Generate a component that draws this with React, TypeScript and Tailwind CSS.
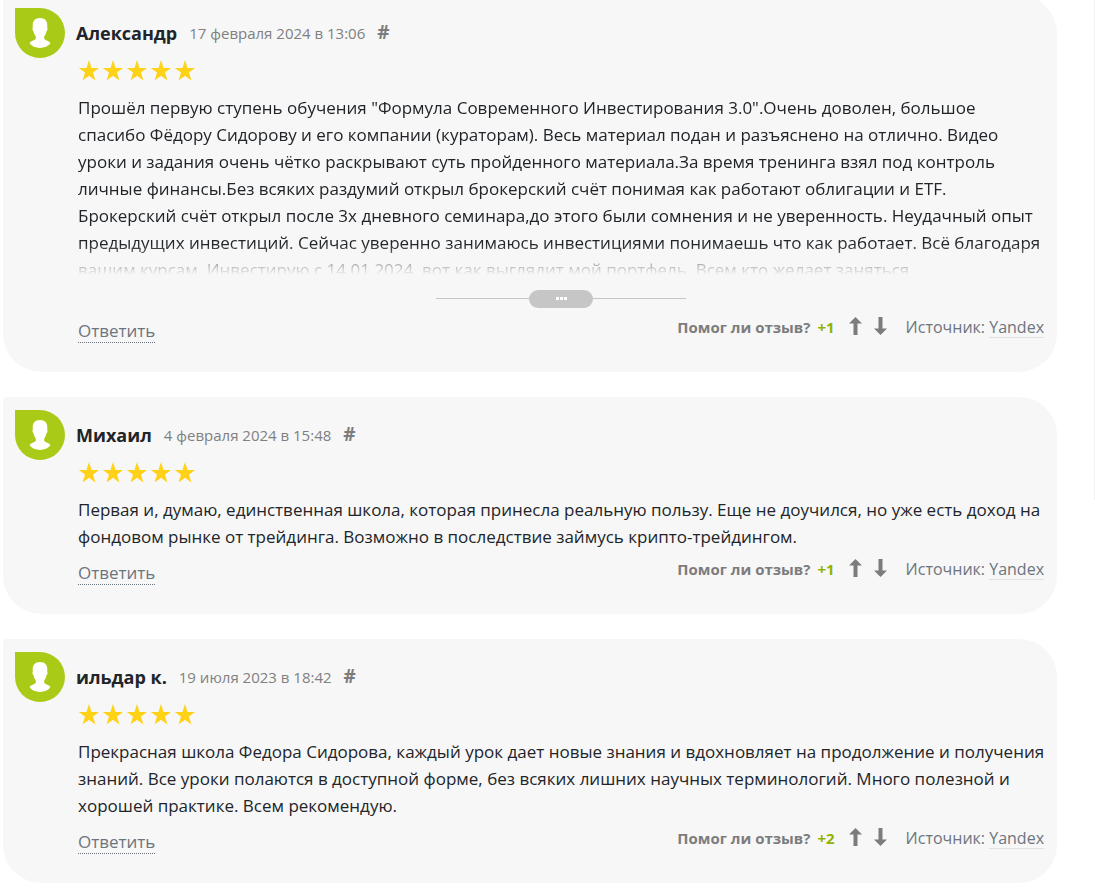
import { useState } from 'react'

interface Review {
  id: string
  author: string
  date: string
  text: string
  votes: number
  collapsible?: boolean
}

const reviews: Review[] = [
  {
    id: 'review-1',
    author: 'Александр',
    date: '17 февраля 2024 в 13:06',
    text: 'Прошёл первую ступень обучения "Формула Современного Инвестирования 3.0".Очень доволен, большое спасибо Фёдору Сидорову и его компании (кураторам). Весь материал подан и разъяснено на отлично. Видео уроки и задания очень чётко раскрывают суть пройденного материала.За время тренинга взял под контроль личные финансы.Без всяких раздумий открыл брокерский счёт понимая как работают облигации и ETF. Брокерский счёт открыл после 3х дневного семинара,до этого были сомнения и не уверенность. Неудачный опыт предыдущих инвестиций. Сейчас уверенно занимаюсь инвестициями понимаешь что как работает. Всё благодаря вашим курсам. Инвестирую с 14.01.2024, вот как выглядит мой портфель. Всем кто желает заняться',
    votes: 1,
    collapsible: true,
  },
  {
    id: 'review-2',
    author: 'Михаил',
    date: '4 февраля 2024 в 15:48',
    text: 'Первая и, думаю, единственная школа, которая принесла реальную пользу. Еще не доучился, но уже есть доход на фондовом рынке от трейдинга. Возможно в последствие займусь крипто-трейдингом.',
    votes: 1,
  },
  {
    id: 'review-3',
    author: 'ильдар к.',
    date: '19 июля 2023 в 18:42',
    text: 'Прекрасная школа Федора Сидорова, каждый урок дает новые знания и вдохновляет на продолжение и получения знаний. Все уроки полаются в доступной форме, без всяких лишних научных терминологий. Много полезной и хорошей практике. Всем рекомендую.',
    votes: 2,
  },
]

function Avatar() {
  return (
    <div className="flex size-[50px] shrink-0 items-center justify-center rounded-full rounded-tl-[3px] bg-[#a9cb17]">
      <svg width="22" height="30" viewBox="0 0 22 30" fill="#fff" aria-hidden="true">
        <path d="M11 0C6.400 0 3.600 2.800 3.700 7.200C3.700 8 3.800 8.600 3.800 9.200C3.200 9.700 3.400 12.600 4.500 13.200C5 15.600 5.900 17.200 6.800 18.400V20.800C6.400 22.600 1 22.600 .7 25.600C2.700 28.400 6.500 30 11 30S19.300 28.400 21.300 25.600C21 22.600 15.600 22.600 15.200 20.800V18.400C16.100 17.200 17 15.600 17.500 13.200C18.600 12.600 18.800 9.700 18.200 9.200C18.200 8.600 18.300 8 18.300 7.200C18.400 2.800 15.600 0 11 0Z" />
      </svg>
    </div>
  )
}

function Stars() {
  return (
    <div className="flex h-6 items-center gap-[3px]" role="img" aria-label="5 из 5">
      {[1, 2, 3, 4, 5].map((n) => (
        <svg key={n} width="21" height="21" viewBox="0 0 21 21" fill="#ffd218">
          <path d="M11 0L13.500 7.900H21.300L15 12.600L17.400 20.500L11 15.700L4.600 20.500L7 12.600L.7 7.900H8.500Z" />
        </svg>
      ))}
    </div>
  )
}

function ArrowIcon({ down = false }: { down?: boolean }) {
  return (
    <svg width="13" height="18" viewBox="0 0 13 18" fill="#7c7c7c" className={down ? 'rotate-180' : ''} aria-hidden="true">
      <path d="M6.500 0L13 6.500H8.500V18H4.500V6.500H0Z" />
    </svg>
  )
}

function ReviewCard({ review }: { review: Review }) {
  const [expanded, setExpanded] = useState(false)
  const [votes, setVotes] = useState(review.votes)
  const collapsed = review.collapsible && !expanded

  return (
    <article id={review.id} className="flex gap-[11px] rounded-[38px] rounded-tl-[4px] bg-[#f7f7f7] p-[13px] pl-3">
      <Avatar />
      <div className="min-w-0 flex-1">
        <header className="flex h-[50px] items-center">
          <h3 className="text-lg font-bold">{review.author}</h3>
          <time className="ml-3 text-[15px] text-[#808080]">{review.date}</time>
          <a href={`#${review.id}`} className="ml-3 pb-[2px] text-[19px] font-bold text-[#7c7c7c]">
            #
          </a>
        </header>
        <div className="pl-[2px]">
          <Stars />
          <p
            className={`-mr-px mt-3 text-[17px] leading-[27px] ${
              collapsed ? 'h-[181px] overflow-hidden mask-[linear-gradient(#000_150px,transparent_181px)]' : ''
            }`}
          >
            {review.text}
          </p>
          {collapsed && (
            <div className="mx-auto mt-[15px] flex w-[250px] items-center">
              <span className="mb-px h-px flex-1 bg-[#c6c6c6]" />
              <button
                onClick={() => setExpanded(true)}
                aria-label="Показать полностью"
                className="flex h-[18px] w-16 items-center justify-center gap-px rounded-full bg-[#c6c6c6] pb-[2px]"
              >
                <span className="size-[3px] bg-white" />
                <span className="size-[3px] bg-white" />
                <span className="size-[3px] bg-white" />
              </button>
              <span className="mb-px h-px flex-1 bg-[#c6c6c6]" />
            </div>
          )}
          <footer className="flex h-[51px] items-start justify-between pt-[9px] text-[#6c757d]">
            <button className="mt-[2px] h-6 border-b border-dotted border-[#6c757d] text-[17px] leading-6">Ответить</button>
            <div className="flex items-start text-[15px] leading-5">
              <span className="font-bold text-[#7c7c7c]">Помог ли отзыв?</span>
              <span className="ml-[7px] font-bold text-[#8fb400]">+{votes}</span>
              <button onClick={() => setVotes(votes + 1)} aria-label="Да" className="ml-[14px]">
                <ArrowIcon />
              </button>
              <button onClick={() => setVotes(votes - 1)} aria-label="Нет" className="ml-3">
                <ArrowIcon down />
              </button>
              <span className="ml-[19px] text-base leading-5">
                Источник:{' '}
                <a href="#yandex" className="inline-block border-b border-[#dee2e6]">
                  Yandex
                </a>
              </span>
            </div>
          </footer>
        </div>
      </div>
    </article>
  )
}

export default function App() {
  return (
    <div className="flex items-start bg-white font-['Open_Sans','Noto_Sans',sans-serif] text-[#212529]">
      <main className="-mt-[5px] mr-[37px] ml-[3px] flex flex-1 flex-col gap-[25px] pb-[9px]">
        {reviews.map((review) => (
          <ReviewCard key={review.id} review={review} />
        ))}
      </main>
      <aside className="h-[500px] w-px bg-[#f0f0f0]" />
    </div>
  )
}
